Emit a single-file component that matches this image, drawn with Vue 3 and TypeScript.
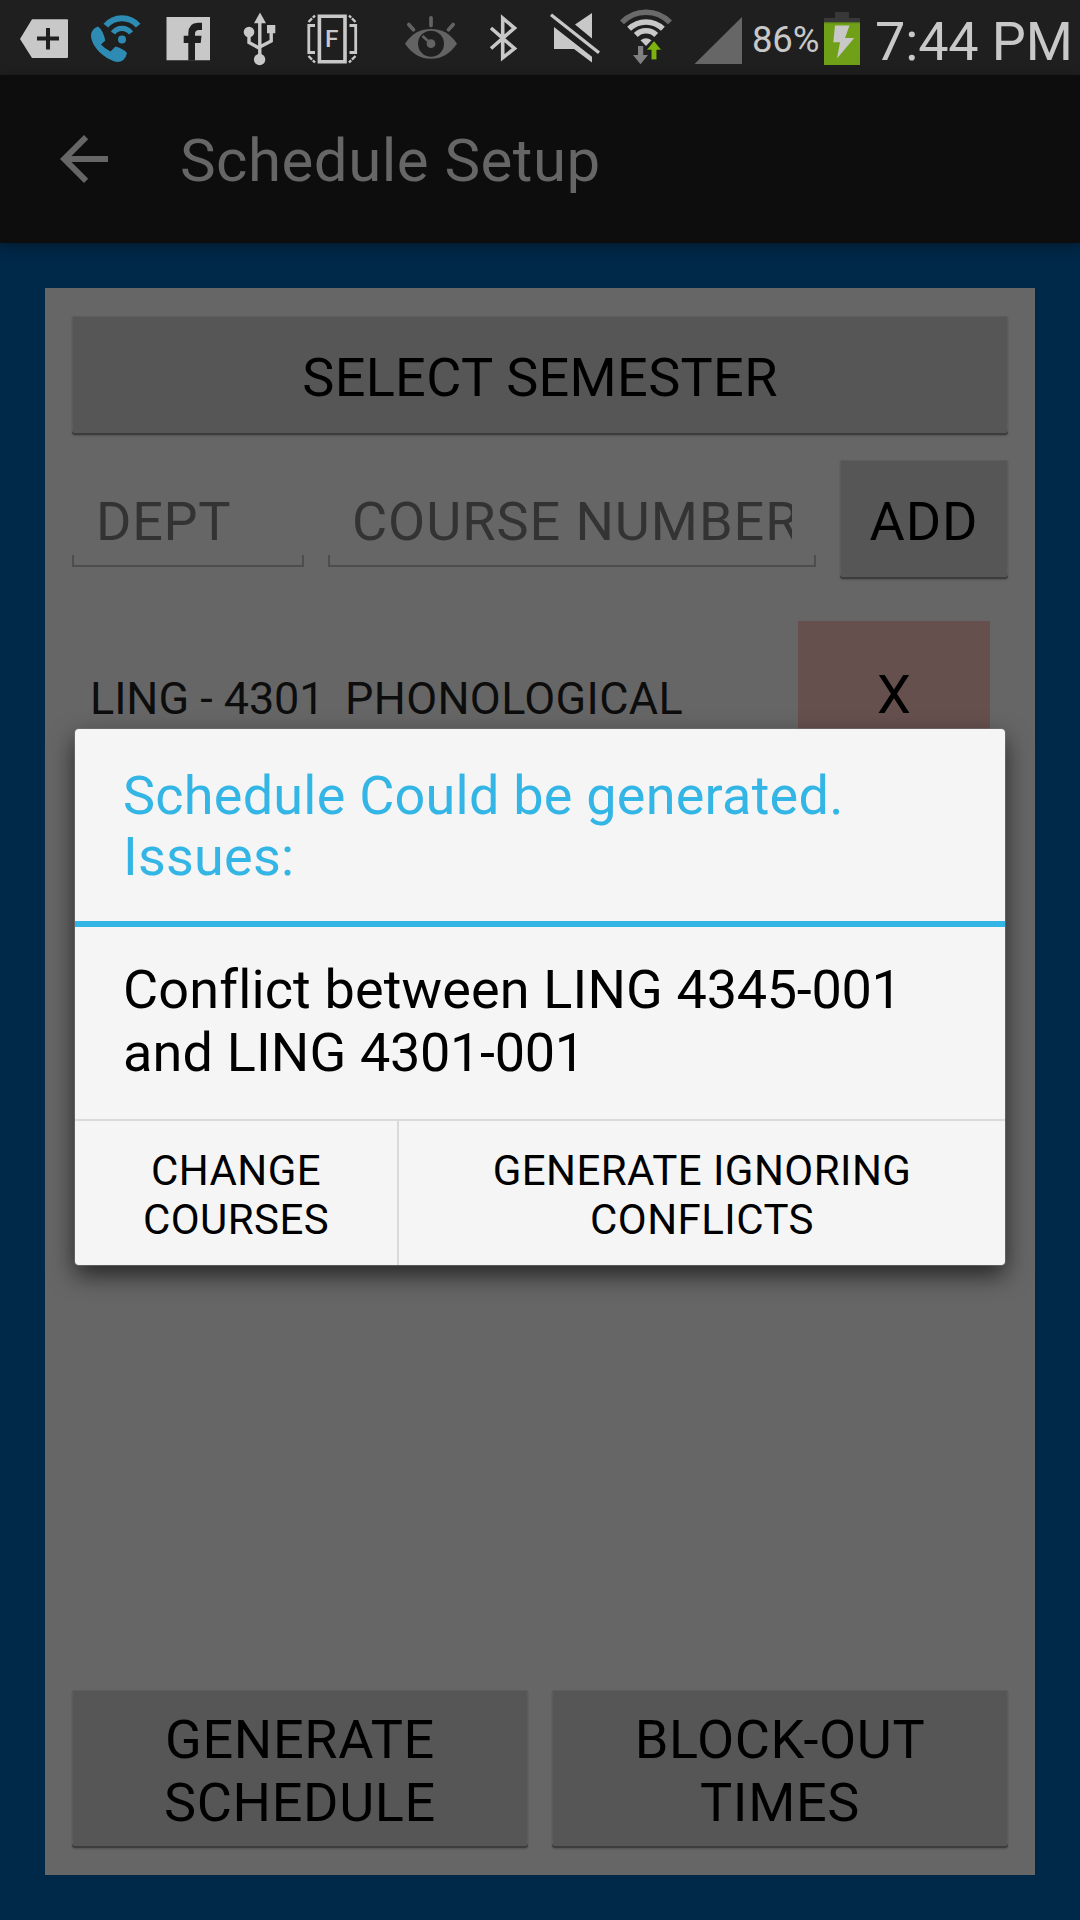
<script setup lang="ts">
interface Course {
  code: string
  title: string
}

const courses: Course[] = [{ code: 'LING - 4301', title: 'PHONOLOGICAL' }]
</script>

<template>
  <div class="screen">
    <header class="status">
      <svg width="80" height="75" viewBox="0 0 80 75">
        <path class="lit" d="M20 39 32 19.2H67q1 0 1 1V57q0 1-1 1H32Z" />
        <path d="M48 28v21.500M37 38.600h22" stroke="#1f1f1f" stroke-width="4" />
      </svg>
      <svg width="75" height="75" viewBox="80 0 75 75">
        <path
          fill="#2e8cb4"
          d="M98 26.500Q91 29 91 36C92 49 108 61 118 62Q125 61.500 127 53Q124 49 115.500 46.500L110.500 51.500Q104 48 101 44.500L105.300 40.500Q103 30 98 26.500Z"
        />
        <circle cx="122" cy="39.500" r="4" fill="#2e8cb4" />
        <g fill="none" stroke="#2e8cb4">
          <path d="M105.800 25.600a21.300 21.300 0 0 1 32.400 0" stroke-width="6" />
          <path d="M113 33a11.100 11.100 0 0 1 18 0" stroke-width="5.200" />
        </g>
      </svg>
      <svg width="75" height="75" viewBox="155 0 75 75">
        <path class="lit" d="M166.500 17H210V60.300H166.500Z" />
        <path
          fill="#1f1f1f"
          d="M188.300 60.500V43H183.700V35.700H188.300V33.500Q188.300 22.800 198 22.800H202V30H199Q195 30 195 34V35.700H201.500L200.700 43H195V60.500Z"
        />
      </svg>
      <svg width="65" height="75" viewBox="230 0 65 75">
        <path class="lit" d="M260 12.500 266 23.300H254ZM267 25h8.300v8.200H267Z" />
        <circle class="lit" cx="249" cy="32" r="5.300" />
        <circle class="lit" cx="259.600" cy="59.500" r="5.700" />
        <path
          class="line"
          stroke-width="3.400"
          d="M259.800 20V58M249 32V42.500L259.800 48.500M271.200 32V41L259.800 47"
        />
      </svg>
      <svg width="105" height="75" viewBox="295 0 105 75">
        <path
          class="line"
          stroke-width="3.600"
          d="M319.400 16.200H345V61.800H319.400Z"
        />
        <path
          class="line"
          stroke-width="2.800"
          d="M315 25.500H308.800V52.500H315M349.500 25.500H355.700V52.500H349.500"
        />
        <path
          class="line"
          stroke-width="2.400"
          stroke-dasharray="5 1.200"
          d="M308.500 22 315 15.500M355.500 22 349 15.500M308.500 56 315 62.500M355.500 56 349 62.500"
        />
        <text x="325" y="47" class="badge">F</text>
      </svg>
      <svg width="75" height="75" viewBox="400 0 75 75">
        <path
          fill="#636363"
          d="M405 43.700C412 33 421 29 431 29S450 33 457 43.700C450 54 441 58.800 431 58.800S412 54 405 43.700Z"
        />
        <circle cx="431" cy="43.700" r="13" fill="#1f1f1f" />
        <circle cx="431" cy="43.700" r="4.400" fill="#636363" />
        <path d="M422.500 36 428 41" stroke="#636363" stroke-width="2.600" />
        <path
          d="M431 17.800V25.500M408.800 24.500 413.500 29.700M453.200 24.500 448.500 29.700"
          stroke="#636363"
          stroke-width="3.700"
          stroke-linecap="round"
        />
      </svg>
      <svg width="65" height="75" viewBox="475 0 65 75">
        <path
          class="line"
          stroke-width="3.600"
          d="M491 28 514.500 48.500 502.700 57.800V18.200L514.500 28 491 48.500"
        />
      </svg>
      <svg width="70" height="75" viewBox="540 0 70 75">
        <path
          class="lit"
          d="M575 24.500 592 13V38.500ZM554 27 592 56.800V62.500L574 49H554Z"
        />
        <path class="line" stroke-width="3.300" d="M551 14.800 599 52.800" />
      </svg>
      <svg width="75" height="75" viewBox="610 0 75 75">
        <g fill="none">
          <path d="M622 22.400a33.400 33.400 0 0 1 48 0" stroke="#6a6a6a" stroke-width="5.500" />
          <path
            d="M629.100 28.800a24.300 24.300 0 0 1 33.800 0M635.800 35a14.500 14.500 0 0 1 20.400 0"
            stroke="#c8c8c8"
            stroke-width="5.500"
          />
        </g>
        <path class="lit" d="M640.500 40.300Q646 36 651.500 40.300L646 46Z" />
        <path fill="#808080" d="M638 46h5.200v9H648L640.500 64.200 633 55H638Z" />
        <path
          fill="#7cb30f"
          stroke="#1f1f1f"
          stroke-width=".6"
          d="M654 40.700 661.500 50H656.800V59.700H651.200V50H646.500Z"
        />
      </svg>
      <svg width="66" height="75" viewBox="685 0 66 75">
        <path fill="#666" d="M694.500 64 742 17V64Z" />
      </svg>
      <span class="percent">86%</span>
      <svg width="46" height="75" viewBox="820 0 46 75">
        <path fill="#383838" d="M835 12h14v6h11v5H824v-5h11Z" />
        <path fill="#70a017" d="M824 22.500h36V65H824Z" />
        <path fill="#55791a" d="M824 22h36v1.200H824Z" />
        <path class="lit" d="M835 25.500H849.500L845 38H854.200L837 58.500 840 42.300H833.300Z" />
      </svg>
      <span class="clock">7:44 PM</span>
    </header>

    <nav class="appbar">
      <svg width="48" height="48" viewBox="0 0 48 48">
        <path fill="#666" d="M24 0 28.200 4.200 11.500 21H48v6H11.500L28.200 43.800 24 48 0 24Z" />
      </svg>
      <h1>Schedule Setup</h1>
    </nav>

    <main class="body">
      <section class="card">
        <button class="btn semester">SELECT SEMESTER</button>
        <div class="entry">
          <div class="field dept"><span>DEPT</span></div>
          <div class="field number"><span>COURSE NUMBER</span></div>
          <button class="btn add">ADD</button>
        </div>
        <div v-for="c in courses" :key="c.code" class="course">
          <span class="code">{{ c.code }}</span>
          <span class="name">{{ c.title }}</span>
          <button class="remove">X</button>
        </div>
        <div class="actions">
          <button class="btn">GENERATE<br />SCHEDULE</button>
          <button class="btn">BLOCK-OUT<br />TIMES</button>
        </div>
      </section>
    </main>

    <div class="dialog" role="dialog">
      <h2>Schedule Could be generated.<br />Issues:</h2>
      <p>Conflict between LING <b>4345-001</b><br />and LING <b>4301-001</b></p>
      <div class="choices">
        <button class="change">CHANGE<br />COURSES</button>
        <button class="ignore">GENERATE IGNORING<br />CONFLICTS</button>
      </div>
    </div>
  </div>
</template>

<style>
body {
  margin: 0;
  background: #002848;
}
</style>

<style scoped>
* {
  box-sizing: border-box;
}
.screen {
  position: relative;
  display: flex;
  flex-direction: column;
  width: 1080px;
  height: 1920px;
  overflow: hidden;
  background: #002848;
  font-family: Roboto, sans-serif;
  font-size: 54px;
  line-height: 63px;
}
button {
  margin: 0;
  padding: 0;
  border: 0;
  background: none;
  color: #000;
  font: inherit;
  letter-spacing: inherit;
}
.status {
  display: flex;
  flex: none;
  height: 75px;
  background: #1f1f1f;
  color: #c8c8c8;
  white-space: nowrap;
}
.status svg {
  flex: none;
}
.lit {
  fill: #c8c8c8;
}
.line {
  fill: none;
  stroke: #c8c8c8;
}
.badge {
  fill: #c8c8c8;
  font: 500 24.5px Roboto, sans-serif;
}
.percent {
  width: 69px;
  padding-left: 1px;
  font-size: 36.5px;
  letter-spacing: -0.2px;
  line-height: 79px;
}
.clock {
  padding-left: 9px;
  letter-spacing: -0.15px;
  line-height: 83px;
}
.appbar {
  position: relative;
  display: flex;
  flex: none;
  align-items: center;
  height: 168px;
  padding-left: 60px;
  background: #0d0d0d;
  box-shadow: 0 3px 12px rgba(0, 0, 0, 0.35);
}
h1 {
  margin: 3px 0 0 72px;
  color: #666;
  font-size: 60px;
  font-weight: 400;
  letter-spacing: 0.48px;
  line-height: 70px;
}
.body {
  display: flex;
  flex: 1;
  padding: 45px;
}
.card {
  display: flex;
  flex: 1;
  flex-direction: column;
  padding: 28px 27px 27px;
  background: #666;
}
.btn {
  padding-top: 4px;
  border-radius: 3px;
  background: #565656;
  box-shadow:
    inset 0 -2px 0 #3d3d3d,
    inset 0 0 0 1px #5d5d5d,
    0 1px 2px rgba(0, 0, 0, 0.2);
}
.semester {
  height: 119px;
  letter-spacing: 0.35px;
}
.entry {
  display: flex;
  gap: 24px;
  height: 119px;
  margin-top: 25px;
}
.field {
  height: 107px;
  padding: 30px 24px 0;
  color: #333;
  background:
    linear-gradient(#4d4d4d, #4d4d4d) left bottom / 2px 12px no-repeat,
    linear-gradient(#4d4d4d, #4d4d4d) right bottom / 2px 12px no-repeat,
    linear-gradient(#4d4d4d, #4d4d4d) left bottom / 100% 2px no-repeat;
}
.field span {
  display: block;
  overflow: hidden;
  white-space: nowrap;
}
.dept {
  width: 232px;
  letter-spacing: 0.7px;
}
.number {
  width: 488px;
  letter-spacing: 0.95px;
}
.add {
  flex: 1;
  letter-spacing: 0.9px;
}
.course {
  display: flex;
  height: 150px;
  margin: 42px 18px 0;
  color: #0d0d0d;
  font-size: 45px;
  line-height: 53px;
}
.course span {
  padding-top: 51px;
  white-space: nowrap;
}
.code {
  width: 255px;
  letter-spacing: -0.05px;
}
.name {
  flex: 1;
  letter-spacing: 0.33px;
}
.remove {
  width: 192px;
  padding-bottom: 3px;
  background: #66504e;
  font-size: 54px;
}
.actions {
  display: flex;
  gap: 24px;
  margin-top: auto;
  letter-spacing: 0.65px;
}
.actions .btn {
  flex: 1;
  height: 158px;
}
.dialog {
  position: absolute;
  left: 75px;
  top: 729px;
  width: 930px;
  height: 536px;
  display: flex;
  flex-direction: column;
  border-radius: 4px;
  background: #f5f5f5;
  box-shadow: 0 0 1px 1px rgba(120, 120, 120, 0.6), 0 10px 24px rgba(0, 0, 0, 0.65);
}
h2 {
  height: 198px;
  margin: 0;
  padding: 36px 48px 0;
  border-bottom: 6px solid #33b5e5;
  color: #33b5e5;
  font-size: 54px;
  font-weight: 400;
  letter-spacing: 0.23px;
  line-height: 61px;
  white-space: nowrap;
}
p {
  height: 192px;
  margin: 0;
  padding: 31px 48px 0;
  letter-spacing: 0.15px;
  white-space: nowrap;
}
p b {
  font-weight: 400;
  letter-spacing: -0.3px;
}
.choices {
  display: flex;
  flex: 1;
  border-top: 2px solid #dadada;
  font-size: 42px;
  letter-spacing: 0.45px;
  line-height: 49px;
}
.choices button {
  padding-top: 4px;
}
.change {
  width: 324px;
  border-right: 2px solid #dadada;
}
.ignore {
  flex: 1;
}
</style>
